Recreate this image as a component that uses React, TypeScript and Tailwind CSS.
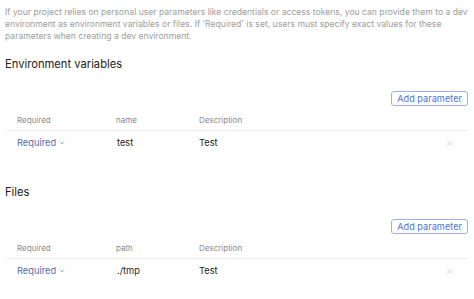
import { ChevronDown, X } from "lucide-react";

type Row = { key: string; desc: string };

function ParamTable({ title, column, rows }: { title: string; column: string; rows: Row[] }) {
  return (
    <section>
      <h2 className="text-[11.2px] leading-[16px] text-[#222]">{title}</h2>
      <div className="mt-[19px] flex justify-end pr-[6px]">
        <button className="rounded-[3px] border border-[#9db1e6] px-[5px] text-[9.2px] leading-[13px] text-[#4d72d8]">
          Add parameter
        </button>
      </div>
      <div className="mt-[4px] mr-[6px]">
        <div className="flex h-[21px] items-center border-b border-[#eeeeee] pl-[12px] text-[8px] text-[#8a8a8a]">
          <div className="w-[99px]">Required</div>
          <div className="w-[83px]">{column}</div>
          <div className="flex-1">Description</div>
        </div>
        {rows.map((r) => (
          <div key={r.key} className="flex h-[24px] items-center pl-[12px] text-[9.3px] text-[#222]">
            <div className="flex w-[99px] items-center gap-[2px] text-[#4f6ea8]">
              Required
              <ChevronDown size={8} strokeWidth={1.5} />
            </div>
            <div className="w-[83px] pl-[1px]">{r.key}</div>
            <div className="flex-1">{r.desc}</div>
            <X size={9} strokeWidth={1.2} className="mr-[14px] text-[#b0b0b0]" />
          </div>
        ))}
      </div>
    </section>
  );
}

export default function App() {
  return (
    <div
      className="h-[299px] w-[474px] overflow-hidden bg-white pl-[5px] pt-[6px]"
      style={{ fontFamily: "Inter, 'Noto Sans', sans-serif" }}
    >
      <p className="text-[8.6px] leading-[12px] text-[#9d9d9d]">
        If your project relies on personal user parameters like credentials or access tokens, you can provide them to a dev
        environment as environment variables or files. If 'Required' is set, users must specify exact values for these
        parameters when creating a dev environment.
      </p>
      <div className="mt-[14px]">
        <ParamTable title="Environment variables" column="name" rows={[{ key: "test", desc: "Test" }]} />
      </div>
      <div className="mt-[29px]">
        <ParamTable title="Files" column="path" rows={[{ key: "./tmp", desc: "Test" }]} />
      </div>
    </div>
  );
}
